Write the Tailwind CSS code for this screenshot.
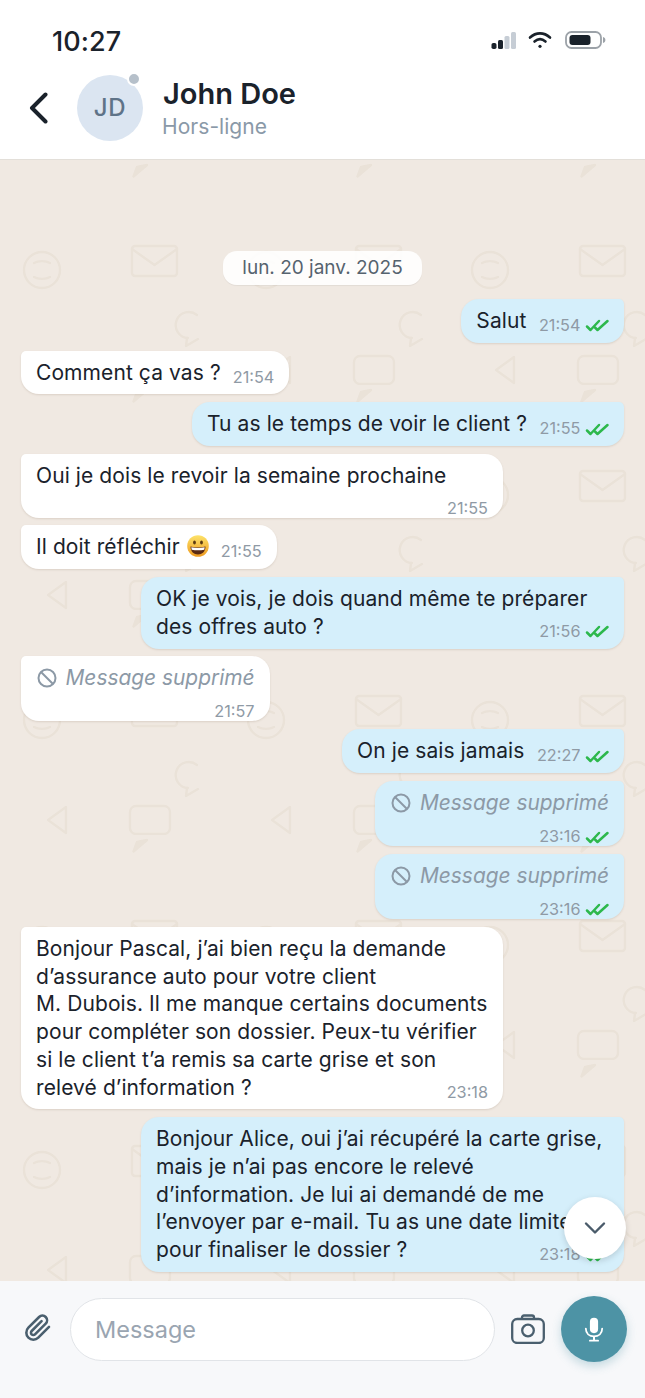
<!DOCTYPE html>
<html lang="fr">
<head>
<meta charset="utf-8">
<title>John Doe</title>
<script src="https://cdn.jsdelivr.net/npm/@tailwindcss/browser@4"></script>
</head>
<body class="m-0 bg-white">
<div class="w-[645px] h-[1398px] flex flex-col overflow-hidden font-['Inter',sans-serif] text-[#1a222b] relative">
  <header class="h-[160px] shrink-0 bg-white border-b border-[#e3dfd9] flex flex-col relative z-20">
    <div class="h-[66px] pl-[52px] pr-[39px] pt-[23px] flex items-start justify-between">
      <span class="text-[27px] leading-[38px] font-medium tracking-[0.1px]">10:27</span>
      <div class="flex items-center mt-[8px]">
        <svg width="26" height="18" viewBox="0 0 26 18" class="mr-[11px]"><rect x="0.5" y="12" width="5" height="6" rx="1.8" fill="#1a222b"/><rect x="7" y="9" width="5" height="9" rx="1.5" fill="#1a222b"/><rect x="13.5" y="5" width="5" height="13" rx="1.5" fill="#c6cdd5"/><rect x="20" y="1" width="5" height="17" rx="1.5" fill="#c6cdd5"/></svg>
        <svg width="24" height="18" viewBox="0 0 24 18" class="mr-[13px]" fill="none" stroke="#1a222b" stroke-width="2.600" stroke-linecap="round"><path d="M2 6.500C8 1 16 1 22 6.500"/><path d="M6.500 10.500C10 7.500 14 7.500 17.500 10.500"/><circle cx="12" cy="15.300" r="1.600" fill="#1a222b" stroke="none"/></svg>
        <svg width="41" height="18" viewBox="0 0 41 18"><rect x="1" y="1" width="35" height="16" rx="5.500" fill="none" stroke="#9ca2a8" stroke-width="1.800"/><rect x="4.500" y="4" width="21" height="10" rx="3" fill="#1a222b"/><path d="M38 6c1.800.5 2.400 1.600 2.400 3s-.6 2.500-2.400 3z" fill="#9ca2a8"/></svg>
      </div>
    </div>
    <div class="flex items-start pl-[29px] pt-[9px]">
      <svg width="20" height="32" viewBox="0 0 20 32" class="mt-[17px] mr-[28px]" fill="none" stroke="#1a222b" stroke-width="4" stroke-linecap="round" stroke-linejoin="round"><path d="M16.500 2.500 3 16l13.500 13.500"/></svg>
      <div class="relative w-[66px] h-[66px] rounded-full bg-[#dbe5f1] flex items-center justify-center text-[#5f7388] text-[24px] font-medium tracking-[0.8px]">JD
        <span class="absolute top-[-3px] right-[2px] w-[14px] h-[14px] rounded-full bg-[#b6c0ca] border-[2.500px] border-white"></span>
      </div>
      <div class="ml-[20px] flex flex-col">
        <span class="text-[29px] leading-[38px] font-semibold">John Doe</span>
        <span class="text-[21px] leading-[28px] text-[#8a99a8] ml-[-1px] tracking-[0.05px]">Hors-ligne</span>
      </div>
    </div>
  </header>

  <main class="relative flex-1 bg-[#f0e9e2] overflow-hidden">
    <svg class="absolute inset-0 w-full h-full" xmlns="http://www.w3.org/2000/svg">
      <defs>
        <pattern id="wall" x="0" y="0" width="224" height="225" patternUnits="userSpaceOnUse">
          <g fill="none" stroke="#eae2d8" stroke-width="2.400" stroke-linejoin="round" stroke-linecap="round">
            <circle cx="42" cy="110" r="18"/><path d="M34 103c4-2.500 12-2.500 16 0M34 117c4 2.500 12 2.500 16 0"/>
            <rect x="132" y="86" width="45" height="30" rx="3"/><path d="M132 89l22.500 16L177 89"/>
            <path d="M197 155a13 13 0 1 0-9 23"/><path d="M187 178l-1 8 12-7"/>
            <rect x="130" y="196" width="40" height="28" rx="6"/>
            <path d="M147 5 133.500 16.500 137 7z" fill="#eae2d8"/>
            <path d="M66 197v26l-18-13z"/>
          </g>
        </pattern>
      </defs>
      <rect width="100%" height="100%" fill="url(#wall)"/>
    </svg>

    <div class="relative flex flex-col gap-[7.900px] px-[21px] pt-[91px] text-[21px] leading-[27.75px] tracking-[0.09px]">
      <div class="self-center h-[34px] px-[19px] mb-[6px] flex items-center rounded-[14px] bg-white/90 text-[19px] tracking-normal text-[#56636f] shadow-[0_1px_1px_rgba(0,0,0,0.06)]">lun. 20 janv. 2025</div>

      <div class="flow-root self-end max-w-[483px] rounded-[18px] rounded-tr-[5px] bg-[#d5effb] px-[15px] py-[8px] shadow-[0_1px_2px_rgba(120,100,80,0.18)]">Salut<span class="float-right ml-[12.500px] mt-[8px] mb-[-8px] h-[20px] flex items-center gap-[4.500px] text-[16.250px] leading-[20px] tracking-normal text-[#8f9aa5]">21:54<svg class="translate-y-[1px]" width="24" height="13" viewBox="0 0 24 13" fill="none" stroke="#2db84c" stroke-width="2.500" stroke-linecap="round" stroke-linejoin="round"><path d="M2 7.500 5.500 11 14 2"/><path d="M10 8.500l2.500 2.500L22.500 2"/></svg></span></div>

      <div class="flow-root self-start max-w-[483px] rounded-[18px] rounded-tl-[5px] bg-white px-[15px] py-[8px] shadow-[0_1px_2px_rgba(120,100,80,0.18)]">Comment ça vas ?<span class="float-right ml-[12px] mt-[8px] mb-[-8px] h-[20px] flex items-center text-[16.250px] leading-[20px] tracking-normal text-[#8f9aa5]">21:54</span></div>

      <div class="flow-root self-end max-w-[483px] rounded-[18px] rounded-tr-[5px] bg-[#d5effb] px-[15px] py-[8px] shadow-[0_1px_2px_rgba(120,100,80,0.18)]">Tu as le temps de voir le client ?<span class="float-right ml-[12.500px] mt-[8px] mb-[-8px] h-[20px] flex items-center gap-[4.500px] text-[16.250px] leading-[20px] tracking-normal text-[#8f9aa5]">21:55<svg class="translate-y-[1px]" width="24" height="13" viewBox="0 0 24 13" fill="none" stroke="#2db84c" stroke-width="2.500" stroke-linecap="round" stroke-linejoin="round"><path d="M2 7.500 5.500 11 14 2"/><path d="M10 8.500l2.500 2.500L22.500 2"/></svg></span></div>

      <div class="flow-root self-start w-[482px] rounded-[18px] rounded-tl-[5px] bg-white px-[15px] py-[8px] shadow-[0_1px_2px_rgba(120,100,80,0.18)]">Oui je dois le revoir la semaine prochaine<span class="float-right ml-[12px] mt-[8px] mb-[-8px] h-[20px] flex items-center text-[16.250px] leading-[20px] tracking-normal text-[#8f9aa5]">21:55</span></div>

      <div class="flow-root self-start max-w-[483px] rounded-[18px] rounded-tl-[5px] bg-white px-[15px] py-[8px] shadow-[0_1px_2px_rgba(120,100,80,0.18)]">Il doit réfléchir <svg class="inline-block align-[-3px] ml-[1px]" width="22" height="22" viewBox="0 0 22 22"><defs><linearGradient id="emo" x1="0" y1="0" x2="0" y2="1"><stop offset="0" stop-color="#fde36a"/><stop offset="1" stop-color="#ee9a1f"/></linearGradient></defs><circle cx="11" cy="11" r="10.800" fill="url(#emo)"/><ellipse cx="7.500" cy="7.500" rx="1.400" ry="2.100" fill="#5a3a12"/><ellipse cx="14.500" cy="7.500" rx="1.400" ry="2.100" fill="#5a3a12"/><path d="M3.500 11.500c4.500 1.200 10.500 1.200 15 0 0 5-3.400 8-7.500 8s-7.500-3-7.500-8z" fill="#5a2a12"/><path d="M4.300 12.200c4 .9 9.400.9 13.400 0l-.4 2.500c-4 .8-8.600.8-12.600 0z" fill="#fff"/></svg><span class="float-right ml-[12px] mt-[8px] mb-[-8px] h-[20px] flex items-center text-[16.250px] leading-[20px] tracking-normal text-[#8f9aa5]">21:55</span></div>

      <div class="flow-root self-end w-[483px] rounded-[18px] rounded-tr-[5px] bg-[#d5effb] px-[15px] py-[8px] shadow-[0_1px_2px_rgba(120,100,80,0.18)]">OK je vois, je dois quand même te préparer<br>des offres auto ?<span class="float-right ml-[12.500px] mt-[8px] mb-[-8px] h-[20px] flex items-center gap-[4.500px] text-[16.250px] leading-[20px] tracking-normal text-[#8f9aa5]">21:56<svg class="translate-y-[1px]" width="24" height="13" viewBox="0 0 24 13" fill="none" stroke="#2db84c" stroke-width="2.500" stroke-linecap="round" stroke-linejoin="round"><path d="M2 7.500 5.500 11 14 2"/><path d="M10 8.500l2.500 2.500L22.500 2"/></svg></span></div>

      <div class="self-start flex flex-col rounded-[18px] rounded-tl-[5px] bg-white pl-[16px] pr-[15px] pt-[8px] shadow-[0_1px_2px_rgba(120,100,80,0.18)] tracking-normal">
        <div class="flex items-center gap-[8.500px] italic text-[20.900px] text-[#8c99a6]"><svg width="20" height="20" viewBox="0 0 20 20" fill="none" stroke="#8c99a6" stroke-width="2"><circle cx="10" cy="10" r="8.500"/><path d="M4 4l12 12"/></svg>Message supprimé</div>
        <span class="self-end mt-[9.250px] h-[20px] text-[16.250px] leading-[20px] text-[#8f9aa5]">21:57</span>
      </div>

      <div class="flow-root self-end max-w-[483px] rounded-[18px] rounded-tr-[5px] bg-[#d5effb] px-[15px] py-[8px] shadow-[0_1px_2px_rgba(120,100,80,0.18)]">On je sais jamais<span class="float-right ml-[12.500px] mt-[8px] mb-[-8px] h-[20px] flex items-center gap-[4.500px] text-[16.250px] leading-[20px] tracking-normal text-[#8f9aa5]">22:27<svg class="translate-y-[1px]" width="24" height="13" viewBox="0 0 24 13" fill="none" stroke="#2db84c" stroke-width="2.500" stroke-linecap="round" stroke-linejoin="round"><path d="M2 7.500 5.500 11 14 2"/><path d="M10 8.500l2.500 2.500L22.500 2"/></svg></span></div>

      <div class="self-end flex flex-col rounded-[18px] rounded-tr-[5px] bg-[#d5effb] pl-[16px] pr-[15px] pt-[8px] shadow-[0_1px_2px_rgba(120,100,80,0.18)] tracking-normal">
        <div class="flex items-center gap-[8.500px] italic text-[20.900px] text-[#8c99a6]"><svg width="20" height="20" viewBox="0 0 20 20" fill="none" stroke="#8c99a6" stroke-width="2"><circle cx="10" cy="10" r="8.500"/><path d="M4 4l12 12"/></svg>Message supprimé</div>
        <span class="self-end mt-[9.250px] h-[20px] flex items-center gap-[4.500px] text-[16.250px] leading-[20px] text-[#8f9aa5]">23:16<svg class="translate-y-[1px]" width="24" height="13" viewBox="0 0 24 13" fill="none" stroke="#2db84c" stroke-width="2.500" stroke-linecap="round" stroke-linejoin="round"><path d="M2 7.500 5.500 11 14 2"/><path d="M10 8.500l2.500 2.500L22.500 2"/></svg></span>
      </div>

      <div class="self-end flex flex-col rounded-[18px] rounded-tr-[5px] bg-[#d5effb] pl-[16px] pr-[15px] pt-[8px] shadow-[0_1px_2px_rgba(120,100,80,0.18)] tracking-normal">
        <div class="flex items-center gap-[8.500px] italic text-[20.900px] text-[#8c99a6]"><svg width="20" height="20" viewBox="0 0 20 20" fill="none" stroke="#8c99a6" stroke-width="2"><circle cx="10" cy="10" r="8.500"/><path d="M4 4l12 12"/></svg>Message supprimé</div>
        <span class="self-end mt-[9.250px] h-[20px] flex items-center gap-[4.500px] text-[16.250px] leading-[20px] text-[#8f9aa5]">23:16<svg class="translate-y-[1px]" width="24" height="13" viewBox="0 0 24 13" fill="none" stroke="#2db84c" stroke-width="2.500" stroke-linecap="round" stroke-linejoin="round"><path d="M2 7.500 5.500 11 14 2"/><path d="M10 8.500l2.500 2.500L22.500 2"/></svg></span>
      </div>

      <div class="flow-root self-start w-[482px] rounded-[18px] rounded-tl-[5px] bg-white px-[15px] py-[8px] shadow-[0_1px_2px_rgba(120,100,80,0.18)]">Bonjour Pascal, j’ai bien reçu la demande<br>d’assurance auto pour votre client<br>M. Dubois. Il me manque certains documents<br>pour compléter son dossier. Peux-tu vérifier<br>si le client t’a remis sa carte grise et son<br>relevé d’information ?<span class="float-right ml-[12px] mt-[8px] mb-[-8px] h-[20px] flex items-center text-[16.250px] leading-[20px] tracking-normal text-[#8f9aa5]">23:18</span></div>

      <div class="flow-root self-end w-[483px] rounded-[18px] rounded-tr-[5px] bg-[#d5effb] px-[15px] py-[8px] shadow-[0_1px_2px_rgba(120,100,80,0.18)]">Bonjour Alice, oui j’ai récupéré la carte grise,<br>mais je n’ai pas encore le relevé<br>d’information. Je lui ai demandé de me<br>l’envoyer par e-mail. Tu as une date limite<br>pour finaliser le dossier ?<span class="float-right ml-[12.500px] mt-[8px] mb-[-8px] h-[20px] flex items-center gap-[4.500px] text-[16.250px] leading-[20px] tracking-normal text-[#8f9aa5]">23:18<svg class="translate-y-[1px]" width="24" height="13" viewBox="0 0 24 13" fill="none" stroke="#2db84c" stroke-width="2.500" stroke-linecap="round" stroke-linejoin="round"><path d="M2 7.500 5.500 11 14 2"/><path d="M10 8.500l2.500 2.500L22.500 2"/></svg></span></div>
    </div>

    <button class="absolute left-[564px] top-[1037px] w-[62px] h-[62px] rounded-full bg-white shadow-[0_2px_6px_rgba(0,0,0,0.15)] flex items-center justify-center">
      <svg width="22" height="14" viewBox="0 0 22 14" fill="none" stroke="#4a5b6a" stroke-width="2.400" stroke-linecap="round" stroke-linejoin="round"><path d="M2 2.500l9 9 9-9"/></svg>
    </button>
  </main>

  <footer class="h-[117px] shrink-0 bg-[#f7f8fa] flex items-start pl-[24px] pr-[18px] pt-[15px] relative z-10">
    <svg class="mt-[18px] mr-[18px]" width="28" height="28" viewBox="0 0 24 24" fill="none" stroke="#4a5f6e" stroke-width="2.200" stroke-linecap="round" stroke-linejoin="round"><path d="M21.440 11.050l-9.190 9.190a6 6 0 0 1-8.490-8.490l9.190-9.190a4 4 0 0 1 5.660 5.660l-9.200 9.190a2 2 0 0 1-2.830-2.830l8.490-8.480"/></svg>
    <div class="w-[425px] h-[63px] mt-[2px] rounded-full bg-white border-[1.500px] border-[#e1e4e8] flex items-center pl-[24px] text-[23.500px] text-[#9aa5b1]">Message</div>
    <svg class="mt-[18px] ml-[16px]" width="34" height="30" viewBox="0 0 34 30" fill="none" stroke="#4a5f6e" stroke-width="2.300" stroke-linejoin="round"><rect x="1.200" y="5" width="31.600" height="24" rx="5"/><circle cx="17" cy="16.500" r="5.800"/><path d="M11 5V3.500a2 2 0 0 1 2-2h8a2 2 0 0 1 2 2V5"/></svg>
    <button class="ml-[16px] w-[66px] h-[66px] rounded-full bg-[#4d93a5] shadow-[0_4px_10px_rgba(77,147,165,0.3)] flex items-center justify-center">
      <svg width="20" height="25" viewBox="0 0 22 27" fill="none"><rect x="6.500" y="0.500" width="9" height="17" rx="4.500" fill="#fff"/><path d="M2 12.500c0 5.500 4 8.500 9 8.500s9-3 9-8.500" stroke="#fff" stroke-width="2" stroke-linecap="round"/><path d="M11 21v4" stroke="#fff" stroke-width="2.200"/><path d="M6.500 25.800h9" stroke="#fff" stroke-width="2" stroke-linecap="round"/></svg>
    </button>
  </footer>
</div>
</body>
</html>
